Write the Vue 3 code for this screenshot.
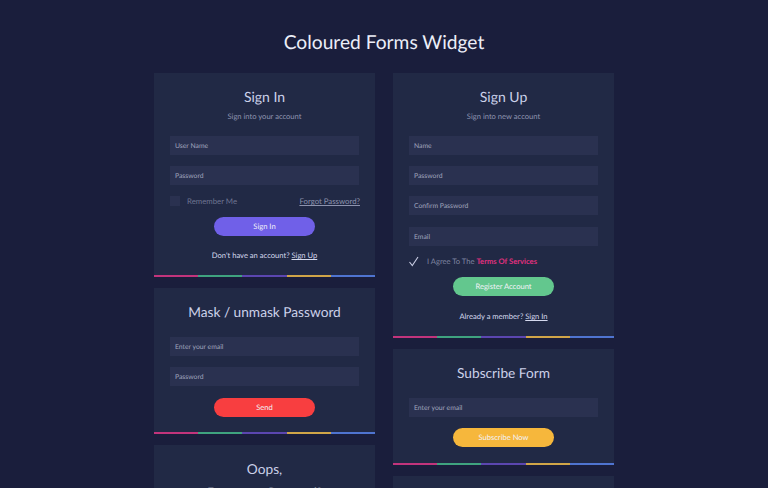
<script setup>
const bars = ['#c2347c', '#3fa37f', '#5b46b0', '#d0a548', '#4f74d0']
</script>

<template>
  <div class="page">
    <h1 class="page-title">Coloured Forms Widget</h1>
    <div class="columns">
      <div class="column">
        <section class="card signin">
          <h2 class="title">Sign In</h2>
          <p class="sub">Sign into your account</p>
          <div class="fields">
            <div class="input">User Name</div>
            <div class="input">Password</div>
          </div>
          <div class="check-row between">
            <div class="check-label"><span class="box"></span><span>Remember Me</span></div>
            <a class="forgot">Forgot Password?</a>
          </div>
          <div class="btn purple">Sign In</div>
          <p class="foot">Don't have an account? <a>Sign Up</a></p>
          <div class="bar"><i v-for="c in bars" :key="c" :style="{ background: c }"></i></div>
        </section>
        <section class="card mask">
          <h2 class="title big">Mask / unmask Password</h2>
          <div class="fields">
            <div class="input">Enter your email</div>
            <div class="input">Password</div>
          </div>
          <div class="btn red">Send</div>
          <div class="bar"><i v-for="c in bars" :key="c" :style="{ background: c }"></i></div>
        </section>
        <section class="card oops">
          <h2 class="title big">Oops,</h2>
          <p class="forgot-line">Forgot your Password?</p>
        </section>
      </div>
      <div class="column">
        <section class="card signup">
          <h2 class="title">Sign Up</h2>
          <p class="sub">Sign into new account</p>
          <div class="fields">
            <div class="input">Name</div>
            <div class="input">Password</div>
            <div class="input">Confirm Password</div>
            <div class="input">Email</div>
          </div>
          <div class="check-row agree">
            <div class="check-label">
              <svg class="tick" viewBox="0 0 12 12" width="12" height="12"><path d="M1.5 7 4.3 10.5 10 2" fill="none" stroke="#c9cde4" stroke-width="1.1"/></svg>
              <span>I Agree To The <b>Terms Of Services</b></span>
            </div>
          </div>
          <div class="btn green">Register Account</div>
          <p class="foot">Already a member? <a>Sign In</a></p>
          <div class="bar"><i v-for="c in bars" :key="c" :style="{ background: c }"></i></div>
        </section>
        <section class="card subscribe">
          <h2 class="title big">Subscribe Form</h2>
          <div class="fields">
            <div class="input">Enter your email</div>
          </div>
          <div class="btn yellow">Subscribe Now</div>
          <div class="bar"><i v-for="c in bars" :key="c" :style="{ background: c }"></i></div>
        </section>
        <section class="card empty"></section>
      </div>
    </div>
  </div>
</template>

<style>
html, body { margin: 0; height: 488px; overflow: hidden; background: #181c3a; }
</style>

<style scoped>
.page { height: 488px; overflow: hidden; background: #1a1e3c; font-family: Lato, "Open Sans", sans-serif; color: #d5d9ee; text-rendering: geometricPrecision; }
.page-title { margin: 0; padding-top: 30px; height: 73px; font-size: 19.2px; line-height: 25px; font-weight: 400; text-align: center; color: #eceef8; box-sizing: border-box; }
.columns { display: flex; justify-content: center; gap: 18px; }
.column { width: 221px; display: flex; flex-direction: column; gap: 11px; }
.card { position: relative; background: #212945; padding: 0 16px; box-sizing: border-box; flex: none; }
.signin { height: 204px; padding-top: 15px; }
.mask { height: 146px; padding-top: 14px; }
.oops { height: 60px; padding-top: 14px; }
.signup { height: 265px; padding-top: 15px; }
.subscribe { height: 116px; padding-top: 13.5px; }
.empty { height: 40px; }
.title { margin: 0; height: 18px; font-size: 14px; line-height: 18px; font-weight: 400; text-align: center; color: #ccd1ea; }
.title.big { height: 20px; line-height: 20px; font-size: 13.7px; }
.sub { margin: 3px 0 0; height: 14px; font-size: 7.6px; line-height: 14px; text-align: center; color: #8e94b0; }
.fields { display: flex; flex-direction: column; gap: 11.2px; margin-top: 13px; }
.mask .fields, .subscribe .fields { margin-top: 15px; }
.input { width: 189px; height: 19px; background: #2a3150; color: #a0a5bd; font-size: 6.8px; line-height: 21px; padding-left: 5px; box-sizing: border-box; }
.check-row { display: flex; align-items: center; height: 12px; margin-top: 10px; font-size: 7.8px; color: #6f7592; }
.check-row.between { justify-content: space-between; width: 190px; }
.check-label { display: flex; align-items: center; gap: 7px; }
.box { width: 10px; height: 10px; background: #2a3150; flex: none; }
.tick { flex: none; margin-left: -1px; margin-right: 0; }
.agree { margin-top: 9.4px; color: #7f85a0; font-size: 7.6px; }
.agree b { font-weight: 700; color: #e0307f; }
.forgot { color: #8d93ae; text-decoration: underline; }
.btn { width: 101px; height: 19px; border-radius: 10px; margin: 10px auto 0; text-align: center; font-size: 7.6px; line-height: 19px; color: #f2f2f8; }
.purple { background: #7060e8; }
.red { background: #f83e40; margin-top: 11.8px; }
.green { background: #63c78e; }
.yellow { background: #f6b73c; margin-top: 11px; }
.foot { margin: 13px 0 0; font-size: 7.6px; line-height: 14px; text-align: center; color: #d5d9ee; }
.signin .foot { margin-top: 12px; }
.foot a { text-decoration: underline; }
.bar { position: absolute; left: 0; right: 0; bottom: 0; height: 2px; display: flex; }
.bar i { flex: 1; }
.forgot-line { margin: 7px 0 0; font-size: 11.5px; text-align: center; color: #e0e3f2; }
</style>
